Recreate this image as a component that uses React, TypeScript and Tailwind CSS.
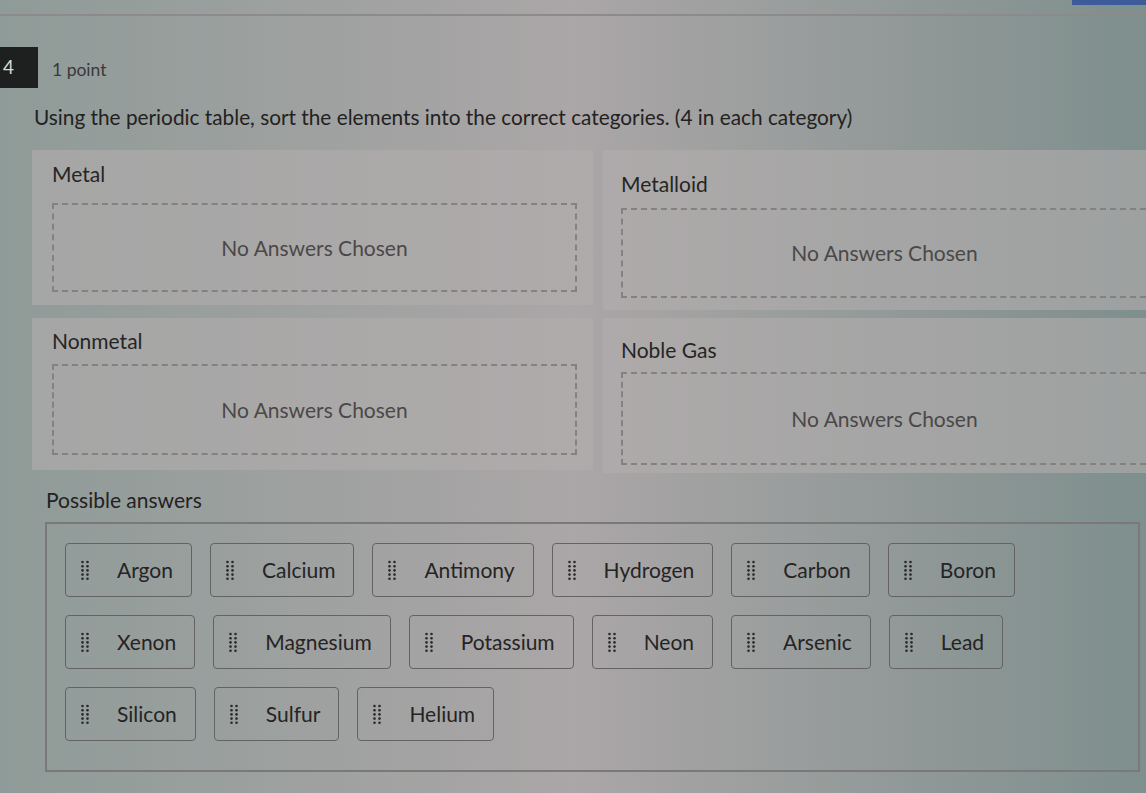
const rows: string[][] = [
  ["Argon", "Calcium", "Antimony", "Hydrogen", "Carbon", "Boron"],
  ["Xenon", "Magnesium", "Potassium", "Neon", "Arsenic", "Lead"],
  ["Silicon", "Sulfur", "Helium"],
];

function Handle() {
  const dots = [];
  for (let r = 0; r < 5; r++) {
    for (let c = 0; c < 2; c++) {
      dots.push(<circle key={`${r}-${c}`} cx={1.5 + c * 5} cy={2 + r * 4.2} r={1.3} />);
    }
  }
  return (
    <svg width="8" height="21" viewBox="0 0 8 21" className="fill-[#2b2a2a]">
      {dots}
    </svg>
  );
}

function Chip({ label }: { label: string }) {
  return (
    <div className="flex h-[54px] items-center gap-[28px] rounded-[4px] border border-[#646262] pl-[15px] pr-[18px] text-[21px] text-[#252424]">
      <Handle />
      <span>{label}</span>
    </div>
  );
}

type CategoryProps = {
  label: string;
  right?: boolean;
  pt: string;
  gap: string;
  boxH: string;
  pb: string;
};

function Category({ label, right, pt, gap, boxH, pb }: CategoryProps) {
  return (
    <div className={`bg-[#b2adae]/60 ${pt} ${pb} ${right ? "pl-[18px]" : "pl-[20px] pr-[16px]"}`}>
      <div className="text-[21px] leading-[28px] text-[#262525]">{label}</div>
      <div
        className={`${gap} ${boxH} flex items-center justify-center border-2 border-dashed border-[#848181] text-[21px] text-[#4a4848] ${right ? "border-r-0" : ""}`}
      >
        No Answers Chosen
      </div>
    </div>
  );
}

export default function App() {
  return (
    <div className="relative h-[793px] w-[1146px] overflow-hidden bg-linear-to-r from-[#8f9b98] via-[#aba6a7] to-[#7e8f8d] font-['Lato','Liberation_Sans',sans-serif]">
      <div className="absolute right-0 top-0 h-[5px] w-[74px] bg-[#3d5b98]" />
      <div className="mt-[14px] h-[2px] w-full bg-[#8c8a8a]" />

      <div className="mt-[31px] flex items-center">
        <div className="flex h-[41px] w-[38px] items-center justify-end bg-[#1e1f1f] pr-[24px] text-[19px] text-[#d8d8d8]">
          4
        </div>
        <div className="ml-[14px] pt-[5px] text-[17.5px] text-[#3a3939]">1 point</div>
      </div>
      <div className="ml-[34px] mt-[15px] text-[20.8px] leading-[28px] text-[#232222]">
        Using the periodic table, sort the elements into the correct categories. (4 in each category)
      </div>

      <div className="ml-[32px] mt-[19px] grid grid-cols-[561px_1fr] items-start gap-x-[10px] gap-y-[8px]">
        <Category label="Metal" pt="pt-[10px]" gap="mt-[15px]" boxH="h-[89px]" pb="pb-[13px]" />
        <Category label="Metalloid" right pt="pt-[20px]" gap="mt-[10px]" boxH="h-[90px]" pb="pb-[12px]" />
        <Category label="Nonmetal" pt="pt-[9px]" gap="mt-[9px]" boxH="h-[91px]" pb="pb-[15px]" />
        <Category label="Noble Gas" right pt="pt-[18px]" gap="mt-[8px]" boxH="h-[93px]" pb="pb-[8px]" />
      </div>

      <div className="ml-[46px] mt-[13px] text-[21px] leading-[28px] text-[#232222]">Possible answers</div>
      <div className="ml-[45px] mr-[6px] mt-[8px] flex h-[250px] flex-col gap-[18px] border-2 border-[#7b7878] px-[18px] pt-[19px]">
        {rows.map((row, i) => (
          <div key={i} className="flex gap-[18px]">
            {row.map((el) => (
              <Chip key={el} label={el} />
            ))}
          </div>
        ))}
      </div>
    </div>
  );
}
